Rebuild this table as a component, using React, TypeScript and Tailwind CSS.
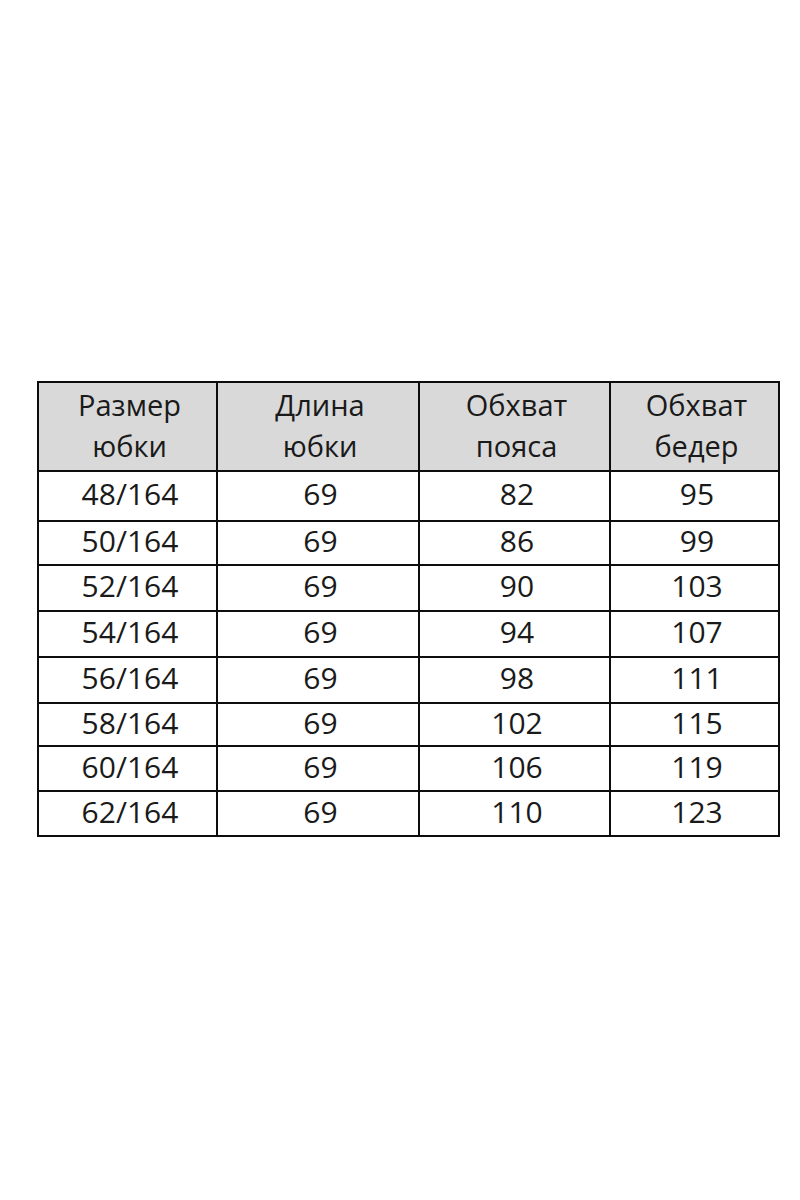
import React from 'react'

const rows: string[][] = [
  ['48/164', '69', '82', '95'],
  ['50/164', '69', '86', '99'],
  ['52/164', '69', '90', '103'],
  ['54/164', '69', '94', '107'],
  ['56/164', '69', '98', '111'],
  ['58/164', '69', '102', '115'],
  ['60/164', '69', '106', '119'],
  ['62/164', '69', '110', '123']
]

const heights = ['h-[50px]', 'h-[44px]', 'h-[46px]', 'h-[46px]', 'h-[46px]', 'h-[43px]', 'h-[45px]', 'h-[45px]']

const headers: [string, string][] = [
  ['Размер', 'юбки'],
  ['Длина', 'юбки'],
  ['Обхват', 'пояса'],
  ['Обхват', 'бедер']
]

export default function App(): React.ReactElement {
  return (
    <div
      className="min-h-[1200px] w-[800px] bg-white pl-[37px] pt-[381px] text-[#1a1a1a]"
      style={{ fontFamily: '"Open Sans", "Noto Sans", sans-serif' }}
    >
      <div className="grid w-[743px] grid-cols-[179px_202px_191px_169px] border-l-2 border-t-2 border-[#0d0d0d]">
        {headers.map(([a, b], i) => (
          <div
            key={i}
            className="flex h-[89px] flex-col items-center justify-center border-b-2 border-r-2 border-[#0d0d0d] bg-[#d9d9d9] pb-[3px] pl-[4px] text-[29px] leading-[41px]"
          >
            <span>{a}</span>
            <span>{b}</span>
          </div>
        ))}
        {rows.map((row, r) =>
          row.map((cell, c) => (
            <div
              key={`${r}-${c}`}
              className={`flex items-center justify-center border-b-2 border-r-2 border-[#0d0d0d] pb-[4px] pl-[5px] text-[30px] leading-none ${heights[r]}`}
            >
              {cell}
            </div>
          ))
        )}
      </div>
    </div>
  )
}
